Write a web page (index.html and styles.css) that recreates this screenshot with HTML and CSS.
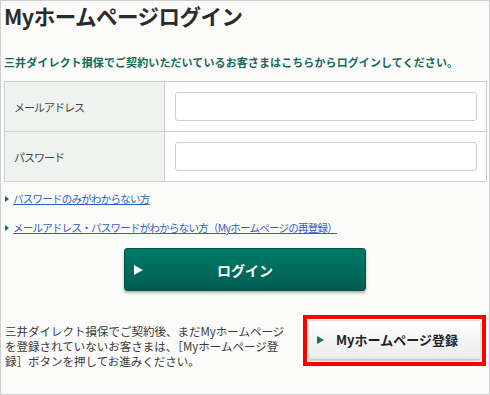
FILE: index.html
```html
<!DOCTYPE html>
<html lang="ja">
<head>
    <meta charset="UTF-8">
    <meta name="viewport" content="width=device-width, initial-scale=1.0">
    <title>Myホームページログイン</title>
    <link rel="stylesheet" href="styles.css">
</head>
<body>
    <div class="page">
        <!-- 見出し -->
        <h1 class="page-title">Myホームページログイン</h1>
        <p class="lead">三井ダイレクト損保でご契約いただいているお客さまはこちらからログインしてください。</p>

        <!-- ログインフォーム -->
        <table class="login-table">
            <tr>
                <th>メールアドレス</th>
                <td><input type="text" class="text-input"></td>
            </tr>
            <tr>
                <th>パスワード</th>
                <td><input type="password" class="text-input"></td>
            </tr>
        </table>

        <ul class="help-links">
            <li><a href="#">パスワードのみがわからない方</a></li>
            <li><a href="#">メールアドレス・パスワードがわからない方（Myホームページの再登録）</a></li>
        </ul>

        <button class="login-btn">
            <span class="arrow-white"></span>
            <span class="login-label">ログイン</span>
        </button>

        <!-- 新規登録 -->
        <div class="register">
            <p class="register-text">三井ダイレクト損保でご契約後、まだMyホームページを登録されていないお客さまは、［Myホームページ登録］ボタンを押してお進みください。</p>
            <div class="register-frame">
                <button class="register-btn">
                    <span class="arrow-green"></span>
                    <span>Myホームページ登録</span>
                </button>
            </div>
        </div>
    </div>
</body>
</html>
```

FILE: styles.css
```css
* {
    margin: 0;
    padding: 0;
    box-sizing: border-box;
}

body {
    font-family: "Noto Sans CJK JP", "Liberation Sans", sans-serif;
    background: #fbfbf9;
    color: #333;
}

.page {
    width: 490px;
    height: 395px;
    border: 1px solid #cfcfcf;
    padding: 1px 3px 0;
    background: #fbfbf9;
}

/* 見出し */
.page-title {
    font-size: 21.5px;
    font-weight: 700;
    line-height: 28px;
    color: #2b2b2b;
    letter-spacing: -0.5px;
}

.lead {
    margin-top: 24px;
    font-size: 11px;
    font-weight: 700;
    line-height: 16px;
    color: #17695a;
    letter-spacing: 0.1px;
}

/* フォーム */
.login-table {
    margin-top: 11px;
    width: 483px;
    border-collapse: collapse;
    border: 1px solid #cfcfcf;
}

.login-table th,
.login-table td {
    border: 1px solid #cfcfcf;
    height: 50px;
}

.login-table th {
    width: 160px;
    background: #eef3ef;
    text-align: left;
    font-weight: 400;
    font-size: 11px;
    padding-left: 9px;
    letter-spacing: -1px;
    color: #444;
}

.login-table td {
    background: #fff;
    padding: 0 9px 0 10px;
}

.text-input {
    display: block;
    width: 302px;
    height: 29px;
    border: 1px solid #cfcfcf;
    border-radius: 3px;
    background: #fff;
}

/* リンク */
.help-links {
    list-style: none;
    margin-top: 9px;
    display: flex;
    flex-direction: column;
    gap: 13px;
}

.help-links li {
    display: flex;
    align-items: center;
    gap: 4px;
    padding-left: 1px;
    font-size: 10.5px;
    line-height: 16px;
    letter-spacing: -0.75px;
}

.help-links li::before {
    content: "";
    border-left: 4px solid #1c6b55;
    border-top: 3px solid transparent;
    border-bottom: 3px solid transparent;
}

.help-links a {
    color: #2f5fc4;
    text-decoration: underline;
}

/* ログインボタン */
.login-btn {
    display: grid;
    grid-template-columns: 9px 1fr 9px;
    align-items: center;
    margin: 12px 0 0 120px;
    width: 242px;
    height: 43px;
    padding: 0 9px;
    border: 1px solid #005445;
    border-radius: 3px;
    background: linear-gradient(#007b68, #005d4f);
    box-shadow: 0 2px 3px rgba(0,0,0,0.3);
    color: #fff;
    font-family: inherit;
    cursor: pointer;
}

.arrow-white {
    width: 0;
    height: 0;
    border-left: 9px solid #fff;
    border-top: 5px solid transparent;
    border-bottom: 5px solid transparent;
}

.login-label {
    font-size: 14px;
    font-weight: 700;
    text-align: center;
}

/* 登録 */
.register {
    display: flex;
    justify-content: space-between;
    align-items: flex-start;
    margin-top: 24px;
}

.register-text {
    width: 282px;
    margin: 9px 0 0 1px;
    font-size: 11.5px;
    line-height: 15px;
    color: #3a3a3a;
}

.register-frame {
    width: 183px;
    border: 4px solid #ff0000;
    padding: 1px 1px 3px;
}

.register-btn {
    display: flex;
    align-items: center;
    gap: 12px;
    width: 100%;
    height: 39px;
    padding-left: 8px;
    border: 1px solid #e0e0e0;
    border-radius: 3px;
    background: linear-gradient(#ffffff, #ececec);
    box-shadow: 0 2px 2px rgba(0,0,0,0.2);
    font-family: inherit;
    font-size: 13px;
    font-weight: 700;
    color: #222;
    cursor: pointer;
}

.arrow-green {
    width: 0;
    height: 0;
    border-left: 7px solid #1c6b55;
    border-top: 4px solid transparent;
    border-bottom: 4px solid transparent;
}
```
